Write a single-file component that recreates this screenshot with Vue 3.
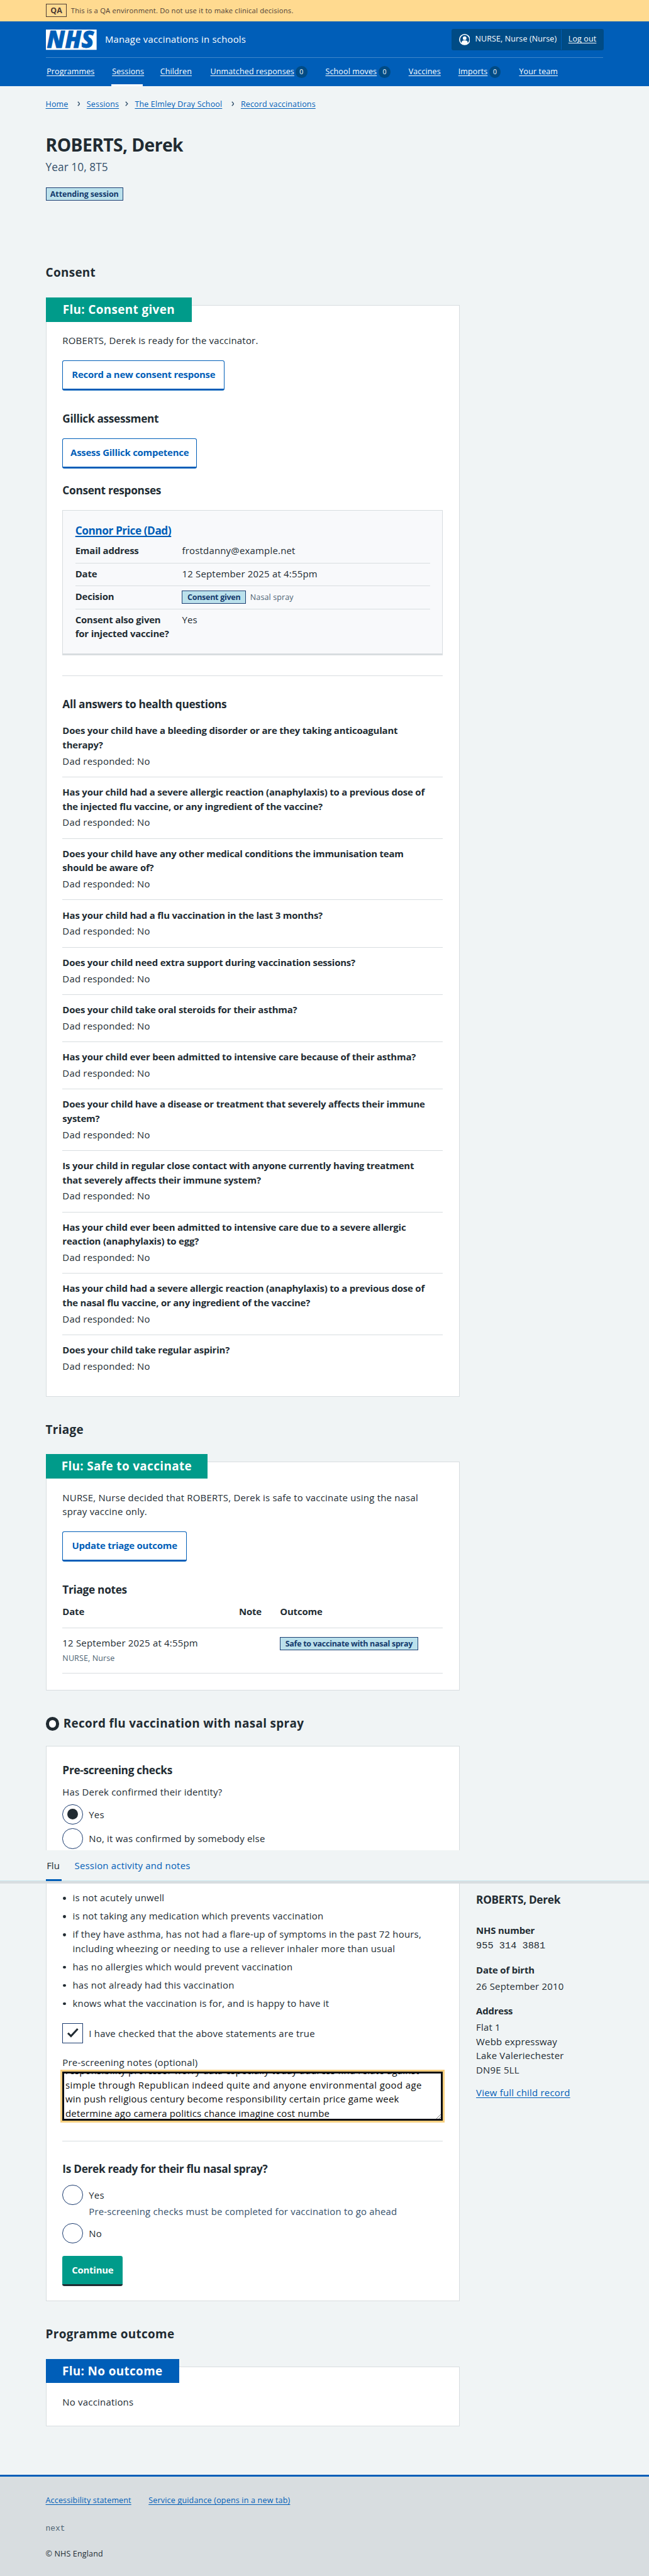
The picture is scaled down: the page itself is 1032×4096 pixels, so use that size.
<script setup>
const navItems = [
  { label: 'Programmes', width: 93 },
  { label: 'Sessions', width: 59, current: true },
  { label: 'Children', width: 63 },
  { label: 'Unmatched responses', width: 163, count: 0 },
  { label: 'School moves', width: 100, count: 0 },
  { label: 'Vaccines', width: 62 },
  { label: 'Imports', width: 56, count: 0 },
  { label: 'Your team', width: 77 },
]
const crumbs = [
  { label: 'Home', width: 45 },
  { label: 'Sessions', width: 59 },
  { label: 'The Elmley Dray School', width: 173 },
  { label: 'Record vaccinations', width: 147 },
]
const questions = [
  ['Does your child have a bleeding disorder or are they taking anticoagulant', 'therapy?'],
  ['Has your child had a severe allergic reaction (anaphylaxis) to a previous dose of', 'the injected flu vaccine, or any ingredient of the vaccine?'],
  ['Does your child have any other medical conditions the immunisation team', 'should be aware of?'],
  ['Has your child had a flu vaccination in the last 3 months?'],
  ['Does your child need extra support during vaccination sessions?'],
  ['Does your child take oral steroids for their asthma?'],
  ['Has your child ever been admitted to intensive care because of their asthma?'],
  ['Does your child have a disease or treatment that severely affects their immune', 'system?'],
  ['Is your child in regular close contact with anyone currently having treatment', 'that severely affects their immune system?'],
  ['Has your child ever been admitted to intensive care due to a severe allergic', 'reaction (anaphylaxis) to egg?'],
  ['Has your child had a severe allergic reaction (anaphylaxis) to a previous dose of', 'the nasal flu vaccine, or any ingredient of the vaccine?'],
  ['Does your child take regular aspirin?'],
]
const statements = [
  ['is not acutely unwell'],
  ['is not taking any medication which prevents vaccination'],
  ['if they have asthma, has not had a flare-up of symptoms in the past 72 hours,', 'including wheezing or needing to use a reliever inhaler more than usual'],
  ['has no allergies which would prevent vaccination'],
  ['has not already had this vaccination'],
  ['knows what the vaccination is for, and is happy to have it'],
]
const noteLines = [
  'responsibility professor worry data especially today address find relate against',
  'simple through Republican indeed quite and anyone environmental good age',
  'win push religious century become responsibility certain price game week',
  'determine ago camera politics chance imagine cost numbe',
]
</script>

<template>
  <div class="page">
    <div class="banner">
      <span class="banner-tag">QA</span>
      <span class="banner-text">This is a QA environment. Do not use it to make clinical decisions.</span>
    </div>

    <header class="header">
      <div class="header-top">
        <svg class="logo" width="100" height="40" viewBox="0 0 100 40" role="img" aria-label="NHS">
          <rect width="100" height="40" fill="#fff" />
          <text x="2" y="36" textLength="93" lengthAdjust="spacingAndGlyphs" font-family="Open Sans, sans-serif" font-size="45" font-weight="800" font-style="italic" fill="#005eb8" stroke="#005eb8" stroke-width="1">NHS</text>
        </svg>
        <span class="service">Manage vaccinations in schools</span>
        <div class="account">
          <span class="user">
            <svg width="22" height="22" viewBox="0 0 22 22">
              <circle cx="11" cy="11" r="10" fill="none" stroke="#fff" stroke-width="2" />
              <circle cx="11" cy="8.3" r="3.6" fill="#fff" />
              <path d="M5 19v-1.600a4.600 4.600 0 0 1 4.600-4.600h2.800a4.600 4.600 0 0 1 4.600 4.600V19l-6 2z" fill="#fff" />
            </svg>
            <span>NURSE, Nurse (Nurse)</span>
          </span>
          <span class="logout"><a>Log out</a></span>
        </div>
      </div>
      <nav class="nav">
        <div v-for="item in navItems" :key="item.label" class="nav-item" :class="{ current: item.current }">
          <a :style="{ width: item.width + 'px' }">{{ item.label }}</a>
          <span v-if="item.count !== undefined" class="count">{{ item.count }}</span>
        </div>
      </nav>
    </header>

    <main class="main">
      <div class="crumbs">
        <template v-for="(crumb, i) in crumbs" :key="crumb.label">
          <svg v-if="i > 0" class="chevron" width="6" height="10" viewBox="0 0 6 10"><path d="M1 1l3.800 4L1 9" fill="none" stroke="#33506b" stroke-width="1.700" /></svg>
          <a :style="{ width: crumb.width + 'px' }">{{ crumb.label }}</a>
        </template>
      </div>
      <h1>ROBERTS, Derek</h1>
      <div class="caption">Year 10, 8T5</div>
      <div><span class="tag tag-session">Attending session</span></div>

      <div class="columns">
        <div class="col-main">
          <h2>Consent</h2>
          <section class="card card-consent">
            <div class="label label-given">Flu: Consent given</div>
            <p class="lead">ROBERTS, Derek is ready for the vaccinator.</p>
            <button class="btn btn-outline">Record a new consent response</button>
            <h3 class="h-after-btn">Gillick assessment</h3>
            <button class="btn btn-outline btn-gillick">Assess Gillick competence</button>
            <h3 class="h-responses">Consent responses</h3>
            <div class="response">
              <h4><a>Connor Price (Dad)</a></h4>
              <dl>
                <div class="row"><dt>Email address</dt><dd>frostdanny@example.net</dd></div>
                <div class="row"><dt>Date</dt><dd>12 September 2025 at 4:55pm</dd></div>
                <div class="row"><dt>Decision</dt><dd class="decision"><span class="tag tag-given">Consent given</span><span class="small">Nasal spray</span></dd></div>
                <div class="row last"><dt>Consent also given<br>for injected vaccine?</dt><dd>Yes</dd></div>
              </dl>
            </div>
            <hr>
            <h3 class="h-after-hr">All answers to health questions</h3>
            <ul class="questions">
              <li v-for="q in questions" :key="q.join()">
                <div v-for="line in q" :key="line" class="q-line">{{ line }}</div>
                <div class="answer">Dad responded: No</div>
              </li>
            </ul>
          </section>

          <h2 class="h-section">Triage</h2>
          <section class="card card-triage">
            <div class="label label-safe">Flu: Safe to vaccinate</div>
            <p class="lead">NURSE, Nurse decided that ROBERTS, Derek is safe to vaccinate using the nasal<br>spray vaccine only.</p>
            <button class="btn btn-outline btn-triage">Update triage outcome</button>
            <h3 class="h-after-btn">Triage notes</h3>
            <div class="table">
              <div class="thead"><span>Date</span><span>Note</span><span>Outcome</span></div>
              <div class="trow">
                <div>12 September 2025 at 4:55pm<div class="small who">NURSE, Nurse</div></div>
                <div></div>
                <div><span class="tag tag-safe">Safe to vaccinate with nasal spray</span></div>
              </div>
            </div>
          </section>

          <h2 class="h-section h-record"><span class="ring"></span>Record flu vaccination with nasal spray</h2>
          <section class="card card-record">
            <h3 class="h-pre">Pre-screening checks</h3>
            <p class="legend">Has Derek confirmed their identity?</p>
            <div class="choice first"><span class="radio checked"></span>Yes</div>
            <div class="choice"><span class="radio"></span>No, it was confirmed by somebody else</div>
            <ul class="statements">
              <li v-for="s in statements" :key="s.join()"><div v-for="line in s" :key="line">{{ line }}</div></li>
            </ul>
            <div class="choice confirm">
              <span class="box"><svg width="40" height="40" viewBox="0 0 40 40"><path d="M11.200 20.800l6 6L30.500 12.500" fill="none" stroke="#212b32" stroke-width="3.800" /></svg></span>
              I have checked that the above statements are true
            </div>
            <p class="notes-label">Pre-screening notes (optional)</p>
            <div class="notes">
              <div v-for="line in noteLines" :key="line">{{ line }}</div>
              <svg class="grip" width="10" height="10" viewBox="0 0 10 10"><path d="M1 10L10 1M6 10l4-4" stroke="#555" stroke-width="1" /></svg>
            </div>
            <hr>
            <h3 class="h-after-hr">Is Derek ready for their flu nasal spray?</h3>
            <div class="choice ready"><span class="radio"></span>Yes</div>
            <div class="hint">Pre-screening checks must be completed for vaccination to go ahead</div>
            <div class="choice not-ready"><span class="radio"></span>No</div>
            <button class="btn btn-primary">Continue</button>
          </section>

          <h2 class="h-section">Programme outcome</h2>
          <section class="card card-outcome">
            <div class="label label-none">Flu: No outcome</div>
            <p class="lead">No vaccinations</p>
          </section>
        </div>

        <aside class="side">
          <h3>ROBERTS, Derek</h3>
          <div class="term nhs">NHS number</div>
          <div class="def mono">955 314 3881</div>
          <div class="term dob">Date of birth</div>
          <div class="def">26 September 2010</div>
          <div class="term">Address</div>
          <div class="def">Flat 1<br>Webb expressway<br>Lake Valeriechester<br>DN9E 5LL</div>
          <a class="record">View full child record</a>
        </aside>
      </div>
    </main>

    <div class="tabs">
      <div class="tab active">Flu</div>
      <div class="tab">Session activity and notes</div>
    </div>

    <footer class="footer">
      <div class="links"><a class="l1">Accessibility statement</a><a>Service guidance (opens in a new tab)</a></div>
      <div class="release">next</div>
      <div class="copy">© NHS England</div>
    </footer>
  </div>
</template>

<style>
body { background: #d8dde0; }
</style>

<style scoped>
.page {
  zoom: 0.80625;
  position: relative;
  width: 1280px;
  height: 5081px;
  overflow: hidden;
  display: flex;
  flex-direction: column;
  background: #f0f4f5;
  color: #212b32;
  font: 400 18.5px/28px "Open Sans", "Noto Sans", sans-serif;
  letter-spacing: 0.0152em;
}
.page *, .page { box-sizing: border-box; }
h1, h2, h3, h4, p, ul, dl, dd, dt { margin: 0; padding: 0; }
ul { list-style: none; }
a { color: #005eb8; text-decoration: underline; text-decoration-thickness: 1px; text-underline-offset: 3px; white-space: nowrap; text-decoration-skip-ink: none; }
hr { border: 0; height: 1px; background: #d8dde0; margin: 40px 0 0; }

.banner { height: 42px; flex: none; display: flex; align-items: center; padding: 0 90px; background: #ffda90; color: #4d3c35; }
.banner-tag { width: 42px; height: 26px; border: 1px solid #4d3c35; font-size: 15.500px; font-weight: 700; line-height: 24px; text-align: center; letter-spacing: 0; }
.banner-text { margin-left: 8px; font-size: 14px; letter-spacing: 0.015em; }

.header { height: 128px; flex: none; padding: 0 90px; background: #005eb8; color: #fff; }
.header-top { height: 72px; display: flex; align-items: center; border-bottom: 1px solid rgba(255, 255, 255, 0.25); }
.logo { flex: none; margin-top: 2px; overflow: visible; }
.service { margin-left: 17px; letter-spacing: 0.0145em; }
.account { margin-left: auto; margin-top: 1px; width: 300px; height: 42px; display: flex; align-items: center; background: #004b85; border-radius: 4px; font-size: 15.500px; margin-right: -1px; letter-spacing: 0.010em; }
.user { width: 217px; height: 40px; display: flex; align-items: center; gap: 10px; padding-left: 14px; border-right: 1px solid #005eb8; white-space: nowrap; }
.logout { padding-left: 13px; }
.header a { color: #fff; }
.nav { display: flex; gap: 32px; height: 56px; font-size: 15.500px; letter-spacing: 0.010em; }
.nav-item { display: flex; align-items: center; height: 56px; padding: 0 2px; border-bottom: 4px solid transparent; border-top: 4px solid transparent; }
.nav-item.current { border-bottom-color: #fff; }
.nav-item a { flex: none; }
.count { width: 23px; height: 23px; margin: 0 0 0 5px; border-radius: 50%; background: #004b85; font-size: 13px; line-height: 23px; text-align: center; }

.main { flex: none; padding: 0 90px; }
.crumbs { display: flex; align-items: center; height: 24px; margin-top: 23px; font-size: 15.500px; line-height: 24px; letter-spacing: 0.013em; }
.chevron { margin: 0 13px 0 17px; }
.crumbs a { flex: none; }
h1 { position: relative; top: 0.800px; margin-top: 46.400px; font-size: 35px; line-height: 44px; font-weight: 700; letter-spacing: -0.0197em; }
.caption { margin-top: 6.300px; font-size: 21.400px; line-height: 32px; color: #35506b; letter-spacing: 0.004em; }
.tag { display: block; height: 26px; border: 1px solid #1c3f72; background: #bbe1ec; color: #143a6c; font-size: 15.500px; font-weight: 700; line-height: 24px; text-align: center; letter-spacing: -0.022em; white-space: nowrap; }
.tag-session { width: 153px; margin-top: 24.300px; letter-spacing: -0.0106em; }
.tag-given { width: 126px; margin-top: 2.500px; }
.tag-safe { width: 272px; margin-top: 2px; }

.columns { display: flex; margin-top: 125.600px; }
.col-main { width: 817px; flex: none; }
h2 { position: relative; top: 1.200px; font-size: 23.400px; line-height: 32px; font-weight: 700; letter-spacing: 0.018em; white-space: nowrap; }
h3, h4 { position: relative; top: 1.200px; font-size: 21.400px; line-height: 28px; font-weight: 700; letter-spacing: -0.018em; white-space: nowrap; }
h4 { letter-spacing: -0.026em; }
.h-section { margin-top: 48.500px; }
.card { border: 1px solid #d8dde0; background: #fff; padding: 0 32px; margin-top: 48px; }
.card-consent { height: 2153px; }
.card-triage { height: 451px; }
.card-record { height: 1095px; margin-top: 28.500px; padding-top: 32.400px; }
.card-outcome { height: 118px; margin-top: 48.400px; }
.label { height: 48px; margin: -16px 0 0 -33px; font-size: 23.400px; line-height: 48px; font-weight: 700; letter-spacing: 0.020em; color: #fff; text-align: center; background: #009b8a; white-space: nowrap; }
.label-given { width: 288px; }
.label-safe { width: 319px; }
.label-none { width: 263px; background: #005eb8; }
.lead { margin-top: 22.800px; white-space: nowrap; }
.btn { display: block; height: 60px; width: 320px; margin-top: 25px; padding: 0; font: 700 18.500px/54px "Open Sans", "Noto Sans", sans-serif; letter-spacing: -0.0148em; text-align: center; border-radius: 4px; white-space: nowrap; }
.btn-outline { border: 2px solid #005eb8; border-bottom-width: 4px; background: #fff; color: #005eb8; }
.btn-gillick { width: 265px; margin-top: 25.600px; }
.btn-triage { width: 245px; }
.h-after-btn { margin-top: 40.400px; }
.h-responses { margin-top: 28.700px; }
.h-after-hr { margin-top: 40.300px; }

.response { height: 286px; margin-top: 25.300px; padding: 24.700px 24px 0; border: 1px solid #d8dde0; border-bottom-width: 4px; background: #f8f9fb; }
h4 a { text-decoration-thickness: 2px; }
dl { margin-top: 5.300px; }
.row { display: flex; min-height: 45px; padding: 6.500px 0 9.500px; border-bottom: 1px solid #d8dde0; }
.row.last { border-bottom: 0; }
dt { width: 210.500px; flex: none; font-weight: 700; letter-spacing: -0.012em; white-space: nowrap; }
.decision { display: flex; height: 28px; }
.small { font-size: 15.500px; line-height: 24px; color: #4c6272; letter-spacing: 0.010em; }
.decision .small { margin: 3.200px 0 0 8.500px; }

.questions { margin-top: 10px; }
.questions li { padding: 15px 0 17px; border-bottom: 1px solid #d8dde0; }
.questions li:last-child { border-bottom: 0; }
.q-line { font-weight: 700; letter-spacing: -0.012em; white-space: nowrap; }
.answer { margin-top: 4px; }

.thead, .trow { display: grid; grid-template-columns: 348px 81px 1fr; }
.thead { height: 63.300px; padding-top: 16px; border-bottom: 2px solid #d8dde0; font-weight: 700; letter-spacing: -0.010em; }
.trow { height: 89px; padding-top: 14.800px; border-bottom: 1px solid #d8dde0; white-space: nowrap; }
.who { margin-top: 3.800px; }

.h-record { display: flex; align-items: center; }
.ring { width: 27px; height: 27px; margin-right: 8px; border: 7px solid #212b32; border-radius: 50%; background: #fff; }
.legend { margin-top: 16px; }
.choice { display: flex; height: 40px; line-height: 40px; margin-top: 8px; white-space: nowrap; }
.choice.first { margin-top: 9.500px; }
.radio { position: relative; width: 40px; height: 40px; margin-right: 12px; flex: none; border: 2px solid #1c3c70; border-radius: 50%; background: #fff; }
.radio.checked::after { content: ""; position: absolute; inset: 8px; border-radius: 50%; background: #212b32; }
.statements { margin-top: 82.800px; }
.statements li { position: relative; padding-left: 20px; margin-bottom: 8px; white-space: nowrap; }
.statements li::before { content: ""; position: absolute; left: 1px; top: 12px; width: 6px; height: 6px; border-radius: 50%; background: #212b32; }
.statements li:last-child { margin-bottom: 0; }
.confirm { margin-top: 25.200px; }
.box { width: 40px; height: 40px; margin-right: 12px; flex: none; border: 2px solid #1c3c70; }
.box svg { display: block; margin: -2px; }
.notes-label { margin-top: 22.800px; }
.notes { position: relative; height: 96px; margin-top: 5.200px; padding: 0 2px; border: 4px solid #0b0f14; outline: 4px solid #f6cf7f; overflow: hidden; color: #0b0c0c; background: #fff; display: flex; flex-direction: column; justify-content: flex-end; white-space: nowrap; }
.notes div { flex: none; height: 28px; }
.notes div:nth-child(2) { letter-spacing: 0.028em; }
.notes div:nth-child(3) { letter-spacing: 0.018em; }
.notes div:nth-child(4) { height: 24.500px; letter-spacing: 0.0145em; }
.grip { position: absolute; right: 0; bottom: 0; }
.ready { margin-top: 17.300px; }
.hint { margin: -1.200px 0 0 52px; color: #35506b; white-space: nowrap; letter-spacing: 0.0135em; }
.not-ready { margin-top: 9.200px; }
.btn-primary { width: 119px; margin-top: 24px; border: 0; border-bottom: 4px solid #212b32; background: #009b8a; color: #fff; }

.side { margin-left: 32px; padding-top: 3211px; white-space: nowrap; }
.term { margin-top: 20.500px; font-weight: 700; letter-spacing: -0.012em; }
.term.nhs { margin-top: 32px; }
.term.dob { margin-top: 19px; }
.def { margin-top: 4px; }
.mono { font-family: "Liberation Mono", monospace; font-size: 19px; letter-spacing: 0; }
.record { display: block; margin-top: 17px; }

.tabs { position: absolute; left: 0; right: 0; top: 3649.500px; height: 65px; padding: 0 90px; display: flex; gap: 24px; background: #f0f4f5; border-bottom: 5px solid #d8dde0; box-shadow: inset 0 -1px 0 #bfe3ec; }
.tab { height: 60px; padding: 15px 2px 0; color: #005eb8; white-space: nowrap; }
.tab.active { width: 31px; color: #212b32; border-bottom: 4px solid #005eb8; letter-spacing: 0; }

.footer { flex: 1; margin-top: 96px; padding: 34px 90px 0; border-top: 4px solid #005eb8; background: #d8dde0; font-size: 15.500px; line-height: 24px; letter-spacing: 0.013em; }
.links { display: flex; }
.l1 { width: 203px; }
.l1 + a { letter-spacing: 0.016em; }
.release { margin-top: 32px; font-family: "Liberation Mono", monospace; font-size: 16px; color: #4c6272; letter-spacing: 0; }
.copy { margin-top: 26px; }
</style>
